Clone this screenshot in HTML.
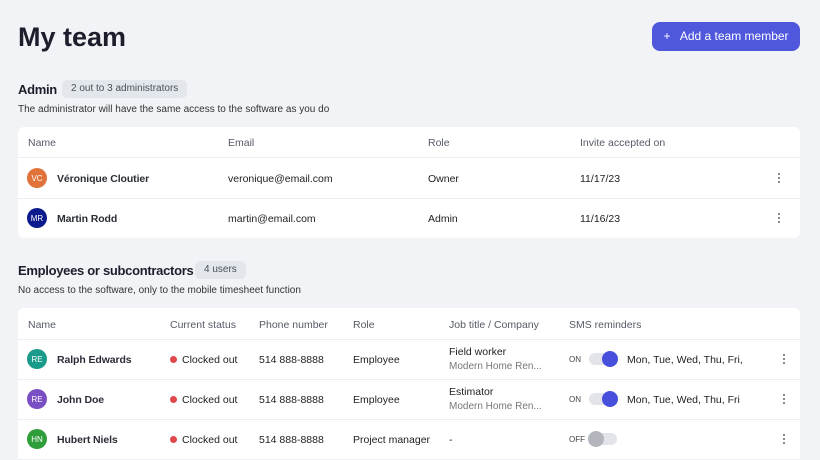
<!DOCTYPE html>
<html><head><style>
*{margin:0;padding:0;box-sizing:border-box}
html,body{width:820px;height:460px;overflow:hidden}
body{background:#f1f3f7;font-family:"Liberation Sans",sans-serif;color:#1f2330;position:relative}
.a{position:absolute;white-space:nowrap}
.card{position:absolute;left:18px;width:782px;background:#fff;border-radius:6px}
.line{position:absolute;left:0;right:0;height:1px;background:#eceef2}
.h{font-size:10.5px;color:#555a66}
.t{font-size:10.5px;color:#222}
.av{position:absolute;width:20px;height:20px;border-radius:50%;color:#fff;font-size:8px;display:flex;align-items:center;justify-content:center}
.nm{font-size:10.5px;font-weight:bold;color:#2a2d36;letter-spacing:-0.1px}
.dots{position:absolute;width:2px}
.dots i{display:block;width:2px;height:2px;background:#666;border-radius:1px;margin-bottom:2px}
.dot{position:absolute;width:7px;height:7px;border-radius:50%;background:#e0474c}
.tg{position:absolute;width:28px;height:12px;border-radius:6px;background:#e2e4ea}
.kn{position:absolute;top:-2px;width:16px;height:16px;border-radius:50%}
.badge{position:absolute;background:#e3e6eb;border-radius:5px;font-size:10px;color:#4a4f5a;padding:0 9px;height:18px;line-height:18px}
.sec{font-size:13px;font-weight:bold;letter-spacing:-0.3px;color:#1c1f2b}
</style></head><body>
<div class="a" style="left:18px;top:22px;font-size:27px;font-weight:bold;color:#1c1f2b">My team</div>
<div class="a" style="left:652px;top:22px;width:148px;height:29px;background:#4f57dd;border-radius:8px;color:#fff;font-size:12px;line-height:29px;text-align:center">+&nbsp;&nbsp; Add a team member</div>

<div class="a sec" style="left:18px;top:82px">Admin</div>
<div class="badge" style="left:62px;top:80px">2 out to 3 administrators</div>
<div class="a" style="left:18px;top:104px;font-size:10px;color:#333">The administrator will have the same access to the software as you do</div>

<div class="card" style="top:127px;height:111px">
<div class="line" style="top:30px"></div><div class="line" style="top:71px"></div>
<div class="a h" style="left:10px;top:10px">Name</div><div class="a h" style="left:210px;top:10px">Email</div><div class="a h" style="left:410px;top:10px">Role</div><div class="a h" style="left:562px;top:10px">Invite accepted on</div>
<div class="av" style="left:9px;top:41px;background:#e0733a">VC</div><div class="a nm" style="left:39px;top:46px">Véronique Cloutier</div>
<div class="a t" style="left:210px;top:46px">veronique@email.com</div><div class="a t" style="left:410px;top:46px">Owner</div><div class="a t" style="left:562px;top:46px">11/17/23</div>
<div class="dots" style="left:760px;top:46px"><i></i><i></i><i></i></div>
<div class="av" style="left:9px;top:81px;background:#0b1a8c">MR</div><div class="a nm" style="left:39px;top:86px">Martin Rodd</div>
<div class="a t" style="left:210px;top:86px">martin@email.com</div><div class="a t" style="left:410px;top:86px">Admin</div><div class="a t" style="left:562px;top:86px">11/16/23</div>
<div class="dots" style="left:760px;top:86px"><i></i><i></i><i></i></div>
</div>

<div class="a sec" style="left:18px;top:263px">Employees or subcontractors</div>
<div class="badge" style="left:195px;top:261px">4 users</div>
<div class="a" style="left:18px;top:285px;font-size:10px;color:#333">No access to the software, only to the mobile timesheet function</div>

<div class="card" style="top:308px;height:152px;border-radius:6px 6px 0 0">
<div class="line" style="top:31px"></div><div class="line" style="top:71px"></div><div class="line" style="top:111px"></div><div class="line" style="top:151px"></div>
<div class="a h" style="left:10px;top:11px">Name</div><div class="a h" style="left:152px;top:11px">Current status</div><div class="a h" style="left:241px;top:11px">Phone number</div><div class="a h" style="left:335px;top:11px">Role</div><div class="a h" style="left:431px;top:11px">Job title / Company</div><div class="a h" style="left:551px;top:11px">SMS reminders</div>

<div class="av" style="left:9px;top:41px;background:#1a9a8a">RE</div><div class="a nm" style="left:39px;top:46px">Ralph Edwards</div>
<div class="dot" style="left:152px;top:48px"></div><div class="a t" style="left:164px;top:46px">Clocked out</div>
<div class="a t" style="left:241px;top:46px">514 888-8888</div><div class="a t" style="left:335px;top:46px">Employee</div>
<div class="a t" style="left:431px;top:38px">Field worker</div><div class="a" style="left:431px;top:53px;font-size:10px;color:#777">Modern Home Ren...</div>
<div class="a" style="left:551px;top:47px;font-size:8px;color:#444">ON</div>
<div class="tg" style="left:571px;top:45px"><div class="kn" style="left:13px;background:#4650dd"></div></div>
<div class="a t" style="left:609px;top:46px">Mon, Tue, Wed, Thu, Fri,</div>
<div class="dots" style="left:765px;top:46px"><i></i><i></i><i></i></div>

<div class="av" style="left:9px;top:81px;background:#7b4fc4">RE</div><div class="a nm" style="left:39px;top:86px">John Doe</div>
<div class="dot" style="left:152px;top:88px"></div><div class="a t" style="left:164px;top:86px">Clocked out</div>
<div class="a t" style="left:241px;top:86px">514 888-8888</div><div class="a t" style="left:335px;top:86px">Employee</div>
<div class="a t" style="left:431px;top:78px">Estimator</div><div class="a" style="left:431px;top:93px;font-size:10px;color:#777">Modern Home Ren...</div>
<div class="a" style="left:551px;top:87px;font-size:8px;color:#444">ON</div>
<div class="tg" style="left:571px;top:85px"><div class="kn" style="left:13px;background:#4650dd"></div></div>
<div class="a t" style="left:609px;top:86px">Mon, Tue, Wed, Thu, Fri</div>
<div class="dots" style="left:765px;top:86px"><i></i><i></i><i></i></div>

<div class="av" style="left:9px;top:121px;background:#2f9e3a">HN</div><div class="a nm" style="left:39px;top:126px">Hubert Niels</div>
<div class="dot" style="left:152px;top:128px"></div><div class="a t" style="left:164px;top:126px">Clocked out</div>
<div class="a t" style="left:241px;top:126px">514 888-8888</div><div class="a t" style="left:335px;top:126px">Project manager</div>
<div class="a t" style="left:431px;top:126px">-</div>
<div class="a" style="left:551px;top:127px;font-size:8px;color:#444">OFF</div>
<div class="tg" style="left:571px;top:125px"><div class="kn" style="left:-1px;background:#b3b6bd"></div></div>
<div class="dots" style="left:765px;top:126px"><i></i><i></i><i></i></div>
</div>
</body></html>
